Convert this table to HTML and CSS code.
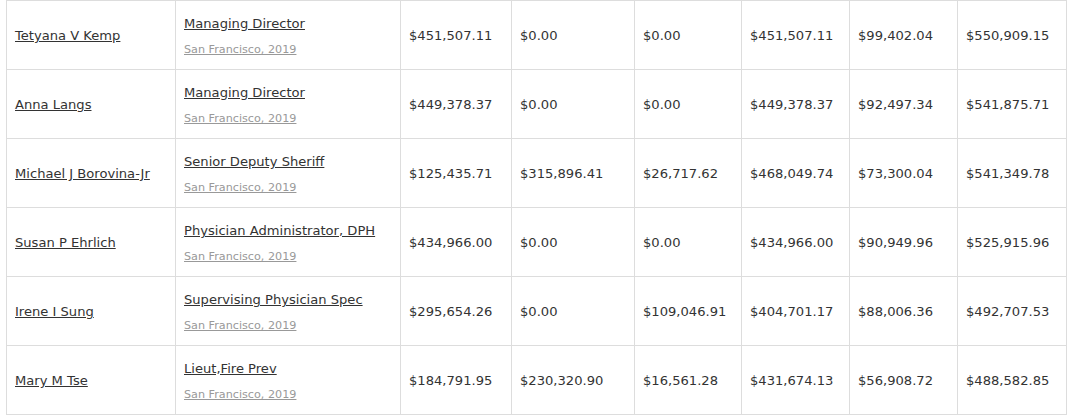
FILE: index.html
```html
<!DOCTYPE html>
<html>
<head>
<meta charset="utf-8">
<link rel="stylesheet" href="styles.css">
</head>
<body>
<table class="pay">
<colgroup>
<col class="c1"><col class="c2"><col class="c3"><col class="c4"><col class="c5"><col class="c6"><col class="c7"><col class="c8">
</colgroup>
<tbody>
<tr>
<td><a class="name" href="#">Tetyana V Kemp</a></td>
<td><a class="title" href="#">Managing Director</a><a class="loc" href="#">San Francisco, 2019</a></td>
<td>$451,507.11</td><td>$0.00</td><td>$0.00</td><td>$451,507.11</td><td>$99,402.04</td><td>$550,909.15</td>
</tr>
<tr>
<td><a class="name" href="#">Anna Langs</a></td>
<td><a class="title" href="#">Managing Director</a><a class="loc" href="#">San Francisco, 2019</a></td>
<td>$449,378.37</td><td>$0.00</td><td>$0.00</td><td>$449,378.37</td><td>$92,497.34</td><td>$541,875.71</td>
</tr>
<tr>
<td><a class="name" href="#">Michael J Borovina-Jr</a></td>
<td><a class="title" href="#">Senior Deputy Sheriff</a><a class="loc" href="#">San Francisco, 2019</a></td>
<td>$125,435.71</td><td>$315,896.41</td><td>$26,717.62</td><td>$468,049.74</td><td>$73,300.04</td><td>$541,349.78</td>
</tr>
<tr>
<td><a class="name" href="#">Susan P Ehrlich</a></td>
<td><a class="title" href="#">Physician Administrator, DPH</a><a class="loc" href="#">San Francisco, 2019</a></td>
<td>$434,966.00</td><td>$0.00</td><td>$0.00</td><td>$434,966.00</td><td>$90,949.96</td><td>$525,915.96</td>
</tr>
<tr>
<td><a class="name" href="#">Irene I Sung</a></td>
<td><a class="title" href="#">Supervising Physician Spec</a><a class="loc" href="#">San Francisco, 2019</a></td>
<td>$295,654.26</td><td>$0.00</td><td>$109,046.91</td><td>$404,701.17</td><td>$88,006.36</td><td>$492,707.53</td>
</tr>
<tr>
<td><a class="name" href="#">Mary M Tse</a></td>
<td><a class="title" href="#">Lieut,Fire Prev</a><a class="loc" href="#">San Francisco, 2019</a></td>
<td>$184,791.95</td><td>$230,320.90</td><td>$16,561.28</td><td>$431,674.13</td><td>$56,908.72</td><td>$488,582.85</td>
</tr>
</tbody>
</table>
</body>
</html>
```

FILE: styles.css
```css
html, body {
  margin: 0;
  padding: 0;
  background: #fff;
}
body {
  font-family: Verdana, "DejaVu Sans", sans-serif;
  font-size: 13.1px;
  color: #333;
}
.pay {
  margin-left: 6px;
  border-collapse: collapse;
  table-layout: fixed;
  width: 1061px;
}
.c1 { width: 169px; }
.c2 { width: 225px; }
.c3 { width: 111px; }
.c4 { width: 123px; }
.c5 { width: 107px; }
.c6 { width: 108px; }
.c7 { width: 108px; }
.c8 { width: 109px; }
.pay td {
  border: 1px solid #ddd;
  height: 69px;
  padding: 1px 8px 0;
  vertical-align: middle;
  white-space: nowrap;
  box-sizing: border-box;
}
.name, .title {
  color: #333;
  text-decoration: underline;
}
.title {
  display: block;
  margin-top: 2px;
  line-height: 16px;
}
.loc {
  display: block;
  margin-top: 11px;
  font-size: 11.2px;
  line-height: 14px;
  color: #999;
  text-decoration: underline;
}
```
